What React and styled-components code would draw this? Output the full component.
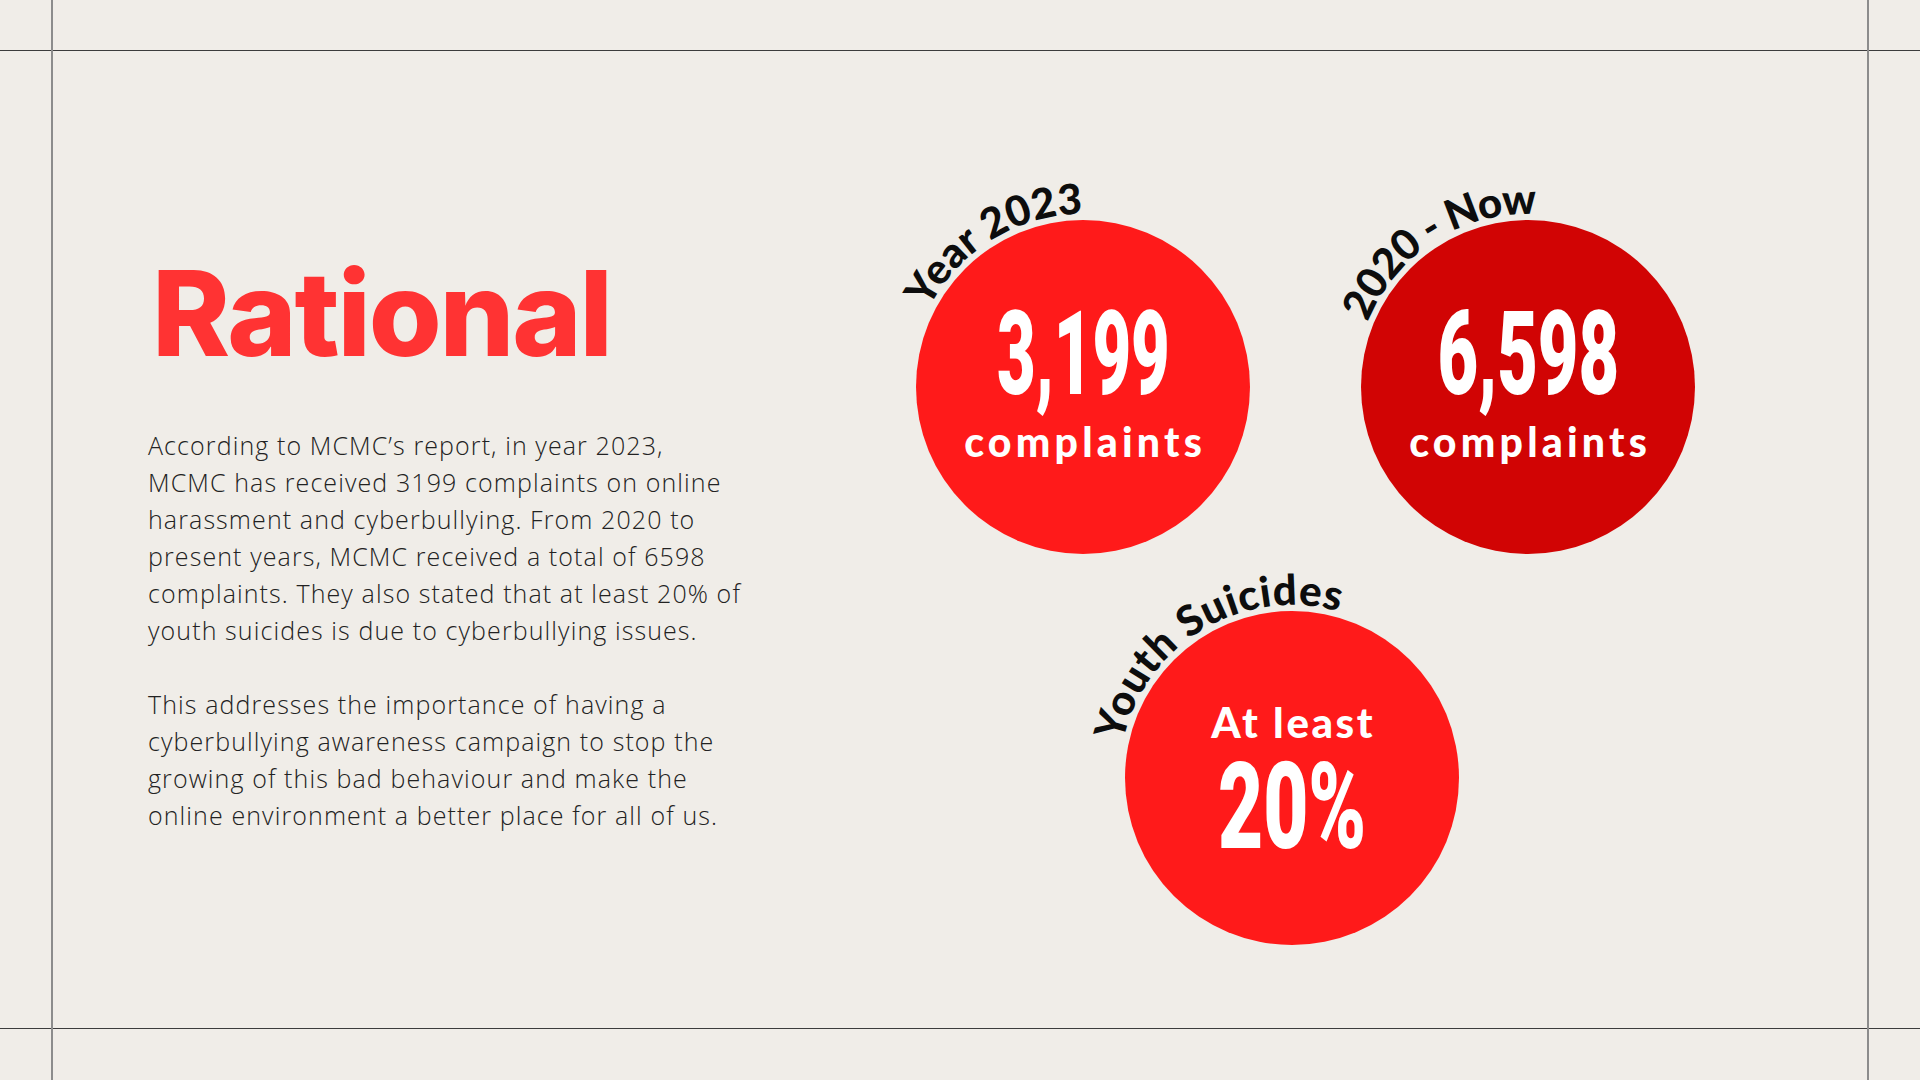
import React from "react";
import styled, { createGlobalStyle } from "styled-components";

const GlobalStyle = createGlobalStyle`
  * { box-sizing: border-box; }
  body {
    margin: 0;
    background: #f0ede8;
  }
`;

const Page = styled.div`
  width: 1920px;
  height: 1080px;
  overflow: hidden;
  background: #f0ede8;
  display: grid;
  grid-template-columns: 51px 1fr 51px;
  grid-template-rows: 50px 1fr 51px;
`;

const HBand = styled.div`
  grid-row: 2;
  grid-column: 1 / -1;
  border-top: 1px solid #3c3c3c;
  border-bottom: 1px solid #3c3c3c;
`;

const VBand = styled.div`
  grid-row: 1 / -1;
  grid-column: 2;
  border-left: 2px solid #8c8c8c;
  border-right: 2px solid #8c8c8c;
`;

const Content = styled.main`
  grid-row: 2;
  grid-column: 2;
  display: flex;
  align-items: flex-start;
  padding-left: 97px;
`;

const TextColumn = styled.section`
  flex: 0 0 768px;
  padding-top: 204px;
`;

const Title = styled.h1`
  margin: 0 0 55px 4px;
  font-family: Inter, "Liberation Sans", sans-serif;
  font-weight: 800;
  font-size: 118px;
  line-height: 1;
  letter-spacing: -2.2px;
  color: #ff3333;
`;

const Body = styled.p`
  margin: 0 0 37px;
  font-family: "Open Sans", "Liberation Sans", sans-serif;
  font-weight: 300;
  font-size: 25px;
  line-height: 37px;
  letter-spacing: 1.1px;
  color: #222222;
  white-space: nowrap;
`;

const StatGrid = styled.section`
  display: grid;
  grid-template-columns: 334px 334px;
  column-gap: 111px;
  row-gap: 57px;
  padding-top: 170px;
`;

const Stat = styled.div`
  position: relative;
  width: 334px;
  height: 334px;
  grid-column: ${(p) => (p.$wide ? "1 / -1" : "auto")};
  margin-left: ${(p) => p.$shift || 0}px;
`;

const Disc = styled.div`
  width: 100%;
  height: 100%;
  border-radius: 50%;
  background: ${(p) => p.$tone};
  color: #ffffff;
  display: flex;
  flex-direction: column;
  align-items: center;
  padding-top: ${(p) => p.$top}px;
`;

const Figure = styled.span`
  display: inline-block;
  font-family: Roboto, "Liberation Sans", sans-serif;
  font-weight: 900;
  font-size: ${(p) => p.$size}px;
  line-height: 1;
  transform: scaleX(${(p) => p.$squeeze});
  margin-top: ${(p) => p.$gap || 0}px;
`;

const Caption = styled.span`
  font-family: Lato, "Liberation Sans", sans-serif;
  font-weight: 900;
  font-size: ${(p) => p.$size}px;
  line-height: 1;
  letter-spacing: ${(p) => p.$spacing}px;
  padding-left: ${(p) => p.$spacing}px;
  margin-top: ${(p) => p.$gap || 0}px;
`;

const ArcSvg = styled.svg`
  position: absolute;
  left: -70px;
  top: -70px;
  width: 474px;
  height: 474px;
  overflow: visible;
  pointer-events: none;
`;

const ArcText = styled.text`
  font-family: Lato, "Liberation Sans", sans-serif;
  font-weight: 900;
  font-size: 42px;
  fill: #0d0d0d;
`;

// circle path starting at `start` degrees (clockwise from 12 o'clock)
const arcPath = (c, r, start) => {
  const a1 = (start * Math.PI) / 180;
  const a2 = ((start + 300) * Math.PI) / 180;
  const x1 = c + r * Math.sin(a1);
  const y1 = c - r * Math.cos(a1);
  const x2 = c + r * Math.sin(a2);
  const y2 = c - r * Math.cos(a2);
  return `M ${x1} ${y1} A ${r} ${r} 0 1 1 ${x2} ${y2}`;
};

const ArcLabel = ({ id, text, start, length }) => (
  <ArcSvg viewBox="0 0 474 474">
    <defs>
      <path id={id} d={arcPath(237, 173, start)} />
    </defs>
    <ArcText>
      <textPath href={`#${id}`} textLength={length} lengthAdjust="spacing">
        {text}
      </textPath>
    </ArcText>
  </ArcSvg>
);

export default function App() {
  return (
    <>
      <GlobalStyle />
      <Page>
        <HBand />
        <VBand />
        <Content>
          <TextColumn>
            <Title>Rational</Title>
            <Body>
              According to MCMC’s report, in year 2023,
              <br />
              MCMC has received 3199 complaints on online
              <br />
              harassment and cyberbullying. From 2020 to
              <br />
              present years, MCMC received a total of 6598
              <br />
              complaints. They also stated that at least 20% of
              <br />
              youth suicides is due to cyberbullying issues.
            </Body>
            <Body>
              This addresses the importance of having a
              <br />
              cyberbullying awareness campaign to stop the
              <br />
              growing of this bad behaviour and make the
              <br />
              online environment a better place for all of us.
            </Body>
          </TextColumn>

          <StatGrid>
            <Stat>
              <Disc $tone="#ff1a1a" $top={76}>
                <Figure $size={117} $squeeze={0.57}>3,199</Figure>
                <Caption $size={41} $spacing={4.2} $gap={8}>complaints</Caption>
              </Disc>
              <ArcLabel id="arc-year" text="Year 2023" start={-63} length={190} />
            </Stat>
            <Stat>
              <Disc $tone="#d10404" $top={76}>
                <Figure $size={117} $squeeze={0.6}>6,598</Figure>
                <Caption $size={41} $spacing={4.2} $gap={8}>complaints</Caption>
              </Disc>
              <ArcLabel id="arc-now" text="2020 - Now" start={-68} length={214} />
            </Stat>
            <Stat $wide $shift={209}>
              <Disc $tone="#ff1a1a" $top={90}>
                <Caption $size={42} $spacing={2.6}>At least</Caption>
                <Figure $size={120} $squeeze={0.65} $gap={4}>20%</Figure>
              </Disc>
              <ArcLabel id="arc-youth" text="Youth Suicides" start={-78} length={283} />
            </Stat>
          </StatGrid>
        </Content>
      </Page>
    </>
  );
}
